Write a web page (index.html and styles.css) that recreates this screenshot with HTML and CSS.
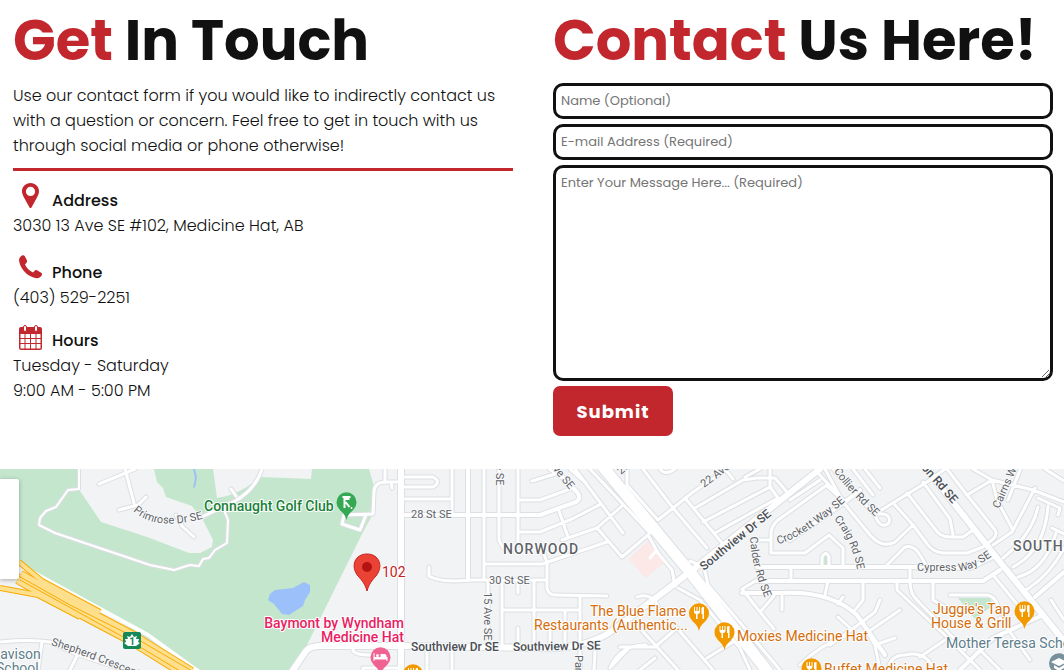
FILE: index.html
```html
<!DOCTYPE html>
<html lang="en">
<head>
<meta charset="utf-8">
<meta name="viewport" content="width=device-width, initial-scale=1">
<title>Contact</title>
<link rel="stylesheet" href="styles.css">
</head>
<body>
<main class="contact">
  <section class="info">
    <h1 class="title"><span class="accent">Get</span> In Touch</h1>
    <p class="intro">Use our contact form if you would like to indirectly contact us with a question or concern. Feel free to get in touch with us through social media or phone otherwise!</p>
    <div class="detail">
      <h2 class="label">
        <svg class="icon" viewBox="0 0 35 35" aria-hidden="true"><path fill-rule="evenodd" d="M17.500 5C12.500 5 9 8.700 9 13.300C9 16 10.200 18 11.300 20L16.500 29.500Q17.500 30.500 18.500 29.500L23.700 20C24.800 18 26 16 26 13.300C26 8.700 22.500 5 17.500 5ZM17.500 8.800A4.600 4.600 0 1 1 17.500 18A4.600 4.600 0 1 1 17.500 8.800Z"/></svg>
        Address
      </h2>
      <p class="line">3030 13 Ave SE #102, Medicine Hat, AB</p>
    </div>
    <div class="detail">
      <h2 class="label">
        <svg class="icon" viewBox="0 0 35 35" aria-hidden="true"><path d="M9 5.500C7 6.500 5.700 8.400 6.100 11C7.500 19.500 15.500 27.300 23.500 28.300C26 28.500 28 27 28.900 25C29.200 24 29 23.300 28.200 22.700L24 20.300C23 19.800 22.300 20 21.600 20.700L20 22.500C16.500 21 13.500 18 12 14.500L13.500 12.800C14.200 12 14.300 11.300 13.900 10.300L11.700 6C11 5 10 5 9 5.500Z"/></svg>
        Phone
      </h2>
      <p class="line">(403) 529-2251</p>
    </div>
    <div class="detail hours">
      <h2 class="label">
        <svg class="icon" viewBox="0 0 35 35" aria-hidden="true"><path fill-rule="evenodd" d="M8 9H27Q29 9 29 11V30Q29 32 27 32H8Q6 32 6 30V11Q6 9 8 9ZM7.500 16V20H11.500V16ZM12.500 16V20H17V16ZM18 16V20H22.500V16ZM23.500 16V20H27.500V16ZM7.500 21V25H11.500V21ZM12.500 21V25H17V21ZM18 21V25H22.500V21ZM23.500 21V25H27.500V21ZM7.500 26V30.500H11.500V26ZM12.500 26V30.500H17V26ZM18 26V30.500H22.500V26ZM23.500 26V30.500H27.500V26Z"/><rect class="ring" x="10.500" y="7.500" width="3" height="6" rx="1.500"/><rect class="ring" x="21.500" y="7.500" width="3" height="6" rx="1.500"/></svg>
        Hours
      </h2>
      <p class="line">Tuesday - Saturday</p>
      <p class="line">9:00 AM - 5:00 PM</p>
    </div>
  </section>
  <section class="reach">
    <h1 class="title"><span class="accent">Contact</span> Us Here!</h1>
    <form class="form">
      <input class="field" type="text" name="name" aria-label="Name" placeholder="Name (Optional)">
      <input class="field" type="email" name="email" aria-label="E-mail address" placeholder="E-mail Address (Required)" required>
      <textarea class="field message" name="message" aria-label="Message" placeholder="Enter Your Message Here... (Required)" required></textarea>
      <button class="submit" type="submit">Submit</button>
    </form>
  </section>
</main>
<section class="map" aria-label="Map">
  <svg class="map-art" viewBox="0 469 1064 201" preserveAspectRatio="xMinYMin slice">
    <defs>
      <g id="lanes">
        <path d="M385 469V482M398 482H386Q374 482 374 492L373 514L344 515L342 524L360 530L366 515M391 482L392 488"/>
        <path d="M405 477H433Q442 482 433 487H405M405 499H450M452 469V515M484 469V580M499 469V540L503 548M518 469V545"/>
        <path d="M518 500H540L570 489M532 481L555 474M518 532H540L572 519L601 504M558 508L568 537M562 540L597 528L623 505M575 469L623 533M590 469L650 533M597 528L622 557L648 535"/>
        <path d="M485 564H542L607 542M543 552L547 562V588Q548 595 555 595L607 596M429 567V576Q440 583 470 580H546M502 580V648M534 580V648M518 580V593M502 610H579M518 628V645M565 610V645M550 630V645M580 597V670M488 580V646M427 648V670M452 648V670M353 646V651Q356 655 370 655M363 670V668H398"/>
        <path d="M627 469V485L658 520M643 469L673 508L707 548M658 520L693 492L727 469M685 498L722 543M715 533L778 498M703 522L770 487M695 508L743 480L757 478H775L787 492M770 469V487L778 498M660 469Q665 476 675 469M725 469L733 479M570 469L586 483M648 535L658 553L672 570L675 586M655 552L650 558"/>
        <path d="M817 472L845 502M827 485L778 520Q771 526 771 534V553H805L829 535M757 540H771M829 535L843 548V567M859 558V567M822 567V557Q826 550 829 557V567M791 567V581M742 589L760 612L774 629M757 580L742 589M774 596L760 612M782 596V610M828 581L825 595M843 597L838 604M863 581V600L855 610M820 480L790 500"/>
        <path d="M825 469L843 502L870 535Q882 549 895 542L913 525L895 505M833 469L875 515Q880 530 889 523Q891 515 883 514H875L927 482L945 469M853 469L873 495M865 469L880 488M907 493L935 529Q940 537 950 537H963L973 530M923 482L950 519L953 535M913 525L928 545Q933 552 943 553H967L983 547M885 567L905 547Q912 545 918 552L925 563"/>
        <path d="M897 581V590L948 638L980 670M910 568V581Q910 594 917 600L965 650M933 581V600L945 607M880 600L875 612L862 622L830 645M862 622L875 645L880 670M868 632L900 610M875 645L895 638M850 628L838 617M800 665Q820 645 847 635M888 670Q890 655 905 655Q925 650 935 670M920 657L945 640"/>
        <path d="M947 469L967 495L995 530Q999 536 988 543M967 495L992 480L1033 490L1064 502M973 469L992 480L997 500L1013 530M1035 488L1012 532L993 545M1058 515L1060 508L1038 498M1038 507Q1032 535 1003 558M1048 506Q1045 550 1013 567M1052 528L1064 534M1056 533Q1045 570 1018 577M1064 548Q1050 575 1026 590M993 575L1030 620M950 595H987Q995 596 998 606M1000 618L1030 660M980 650L1000 670M1051 600L1064 620M1020 470L1008 500M1045 469L1064 481"/>
        <path d="M637 597Q651 592 658 606M630 647L610 668M637 625L678 670M610 668Q620 645 646 645M655 647L677 628M677 628L713 670M707 658L733 642M595 652L594 670M678 588L700 600L740 648L750 670M690 561L704 567L708 585L770 658L780 670M760 469L745 477M620 647L655 647L677 628M640 670L655 658"/>
        <path d="M125 469L134 503M99 484L135 469M119 510L138 505L146 497M176 515L182 526L194 537M204 516L235 501Q255 490 262 469M231 489L236 496M42 642L38 670M78 654L70 670"/>
        <path d="M0 642Q30 639 50 642L76 654L130 672"/>
      </g>
      <g id="streets">
        <path d="M403 515H540L576 502Q582 498 577 492L560 475L550 469M468 469V580M757 567H917M757 581H983L1000 570M917 568H970L995 556M742 593H780Q830 590 857 615L885 655M827 485L845 502L860 490M1043 615L993 638L960 670M1035 597L1064 572M845 502L790 540"/>
      </g>
      <g id="avenues">
        <path d="M293 670L306 651Q310 646 320 646H403L540 648Q590 650 620 625L690 572L820 469"/>
        <path d="M401 469V670M927 469L1000 562L1064 641"/>
      </g>
      <path id="trail" d="M79 469V489L68 490L56 507L46 511L40 518L39 525L55 533L150 565L174 570L190 565L199 566L203 559L209 558L215 550L227 543L228 520L224 510"/>
      <path id="main" d="M603 467L690 572L768 672"/>
      <path id="hw" d="M0 562L19 577L60 600L132 638L190 674M19 562L42 581L100 612M0 588L38 595L80 617"/>
      <path id="p-primrose" d="M133 511Q158 534 215 515"/>
      <path id="p-shep" d="M51 645Q87 656 160 686"/>
      <path id="p-south" d="M704 571L800 492"/>
      <path id="p-crockett" d="M778 544Q805 538 856 492"/>
      <path id="p-collier" d="M834 471Q845 489 886 527"/>
      <path id="p-craig" d="M834 519Q854 542 859 580"/>
      <path id="p-calder" d="M750 537Q751 570 773 617"/>
      <path id="p-cypress" d="M917 571H961Q975 570 1008 545"/>
    </defs>
    <rect class="land" x="0" y="469" width="1064" height="201"/>
    <path class="park" d="M9 469H80V491L101 522L147 537L189 553H200L212 547L213 540L203 520L192 506L166 497L163 488L157 482L154 469H213L217 498Q240 495 260 477L311 479L312 469H369L373 483V514L363 532L306 647L293 670H200L19 562L0 540V469Z"/>
    <path class="park" d="M958 598H990L993 605L975 619ZM823 565V557Q826 553 828 557V565Z"/>
    <path class="water" d="M193 469L195 478L193 488L195 487L197 478L195 469ZM270 594L275 590L293 588L304 582L310 585V592L305 600L303 606L289 615L282 614L274 604L268 600Z"/>
    <g class="edge"><use href="#lanes" class="w5"/><use href="#streets" class="w6"/><use href="#avenues" class="w8"/><use href="#trail" class="w4"/><use href="#main" class="w12"/></g>
    <path class="plaza" d="M629 559L648 541L664 563L645 578Z"/>
    <g class="road"><use href="#lanes" class="w3"/><use href="#streets" class="w4"/><use href="#avenues" class="w6"/><use href="#trail" class="w2"/><use href="#main" class="w11"/></g>
    <path class="road w4" d="M29 570L148 635L202 674"/>
    <use href="#hw" class="hw-edge"/>
    <path class="hw-edge wide" d="M19 577L60 600L132 638L190 674"/>
    <use href="#hw" class="hw-fill"/>
    <path class="hw-fill wide" d="M19 577L60 600L132 638L190 674"/>
    <path class="hw-mid" d="M15 574L70 605L132 636L192 671M20 580L60 602L125 638L180 671"/>

    <rect x="123" y="632" width="18" height="17" rx="2" fill="#168757"/>
    <path fill="#fff" d="M132 634L134 637L137 636L136 639L139 639L138 642L140 643L136 646H128L124 643L126 642L125 639L128 639L127 636L130 637Z"/>
    <text class="shield" x="132" y="645">1</text>

    <g class="street">
      <text><textPath href="#p-primrose">Primrose Dr SE</textPath></text>
      <text><textPath href="#p-shep">Shepherd Crescent</textPath></text>
      <text><textPath href="#p-crockett">Crockett Way SE</textPath></text>
      <text><textPath href="#p-collier">Collier Rd SE</textPath></text>
      <text><textPath href="#p-craig">Craig Rd SE</textPath></text>
      <text><textPath href="#p-calder">Calder Rd SE</textPath></text>
      <text><textPath href="#p-cypress">Cypress Way SE</textPath></text>
      <text x="411" y="518">28 St SE</text>
      <text x="489" y="584">30 St SE</text>
      <text transform="translate(484 592) rotate(90)">15 Ave SE</text>
      <text transform="translate(496 452) rotate(90)">Ave SE</text>
      <text transform="translate(548 464) rotate(50)">Ave SE</text>
      <text transform="translate(575 655) rotate(90)">Park St</text>
      <text transform="translate(704 488) rotate(-37)">22 Ave SE</text>
      <text transform="translate(621 475) rotate(-42)">20 Ave</text>
      <text transform="translate(999 509) rotate(-66)">Cairns Way</text>
    </g>
    <g class="street major">
      <text x="411" y="651">Southview Dr SE</text>
      <text transform="translate(513 651) rotate(-1)">Southview Dr SE</text>
      <text><textPath href="#p-south">Southview Dr SE</textPath></text>
      <text transform="translate(902 446) rotate(49)">Division Rd SE</text>
    </g>
    <g class="district"><text x="503" y="554">NORWOOD</text><text x="1013" y="551">SOUTH</text></g>
    <g class="poi school"><text x="-9" y="659">Davison</text><text x="-4" y="673">School</text><text x="946" y="648">Mother Teresa School</text></g>
    <g class="poi food">
      <text x="590" y="616">The Blue Flame</text><text x="534" y="630">Restaurants (Authentic...</text>
      <text x="737" y="641">Moxies Medicine Hat</text><text x="824" y="674">Buffet Medicine Hat</text>
      <text x="933" y="614">Juggie's Tap</text><text x="931" y="628">House &amp; Grill</text>
    </g>
    <g class="poi golf"><text x="204" y="511">Connaught Golf Club</text></g>
    <g class="poi hotel"><text class="end" x="404" y="628">Baymont by Wyndham</text><text class="end" x="404" y="642">Medicine Hat</text></g>
    <text class="poi here" x="382" y="577">102</text>

    <defs>
      <path id="pin" d="M0 18C-1.500 12-4 11-7 7.500A10 10 0 1 1 7 7.500C4 11 1.500 12 0 18Z"/>
      <path id="dine" d="M-5-6V-1Q-5 1-3 1V6H-1.500V1Q1 1 1-1V-6H0V-2H-1.500V-6H-2.500V-2H-4V-6ZM2.500-5Q2.500-6 5-6V6H3.500V1H2.500Z"/>
    </defs>
    <g transform="translate(346.500 502)"><use href="#pin" fill="#34a853"/><path class="golfer" d="M-4-5H4M-2-5V-3L3-3M-2-3V6M-1 0L3 5"/><circle cx="5" cy="6" r="1" fill="#fff"/></g>
    <g fill="#f29900"><use href="#pin" x="699" y="613"/><use href="#pin" x="724.500" y="632"/><use href="#pin" x="1024.500" y="611"/><use href="#pin" x="811.500" y="668"/><use href="#pin" x="413" y="674"/></g>
    <g fill="#fff"><use href="#dine" x="699" y="613"/><use href="#dine" x="724.500" y="632"/><use href="#dine" x="1024.500" y="611"/><use href="#dine" x="811.500" y="668"/><use href="#dine" x="413" y="674"/></g>
    <g transform="translate(380.500 657)"><use href="#pin" fill="#f06292"/><path fill="#fff" d="M-7-4H-6V1H6V-1Q6-3 4-3H0V0H-6V4H-7ZM6 0H7V4H6ZM-6 1H6V2.500H-6Z"/><circle cx="-3" cy="-1.500" r="1.500" fill="#fff"/></g>
    <g transform="translate(1059 663)"><use href="#pin" fill="#78909c"/><path fill="#fff" d="M-8-1L0-5L8-1L0 3ZM-5 2L0 5L5 2V5L0 8L-5 5Z"/></g>
    <path d="M367 591C365 584 362.500 581 358 576C350 566 355 554 367 554C379 554 384 566 376 576C371.500 581 369 584 367 591Z" fill="#ea4335" stroke="#c5221f" stroke-width="1"/>
    <circle cx="367" cy="567" r="5" fill="#b31412"/>
  </svg>
  <div class="map-card"></div>
</section>
</body>
</html>
```

FILE: styles.css
```css
* {
  box-sizing: border-box;
}

body {
  margin: 0;
  background: #fff;
  color: #111;
  font: 300 16px/25px Poppins, Inter, "Open Sans", sans-serif;
}

h1,
h2,
p {
  margin: 0;
}

.contact {
  display: grid;
  grid-template-columns: 1fr 1fr;
  gap: 40px;
  padding: 0 11px 33px 13px;
}

.title {
  padding-bottom: 1px;
  font-size: 56px;
  font-weight: 700;
  line-height: 82px;
  white-space: nowrap;
}

.accent {
  color: #c1272d;
}

.intro {
  padding-bottom: 10px;
  margin-bottom: 7px;
  border-bottom: 3px solid #c1272d;
}

.detail {
  margin-bottom: 12px;
}

.hours {
  margin-top: -4px;
  margin-bottom: 0;
}

.label {
  display: flex;
  align-items: flex-end;
  gap: 4px;
  height: 35px;
  font-size: 16px;
  font-weight: 500;
  line-height: 25px;
}

.icon {
  width: 35px;
  height: 35px;
  fill: #c1272d;
}

.ring {
  fill: #fff;
  stroke: #c1272d;
}

.form {
  display: flex;
  flex-direction: column;
  align-items: flex-start;
  gap: 5px;
}

.field {
  display: block;
  width: 100%;
  height: 36px;
  padding: 5px;
  border: 3px solid #111;
  border-radius: 10px;
  background: #fff;
  color: #111;
  font: 400 13px/20px Poppins, Inter, "Open Sans", sans-serif;
}

.field::placeholder {
  color: #757575;
}

.message {
  height: 216px;
  resize: both;
}

.submit {
  width: 120px;
  height: 50px;
  padding: 0;
  border: 0;
  border-radius: 7px;
  background: #c1272d;
  color: #fff;
  font: 700 18px/25px Poppins, Inter, "Open Sans", sans-serif;
  letter-spacing: 1px;
}

.map {
  position: relative;
  overflow: hidden;
}

.map-art {
  display: block;
  width: 100%;
  font-family: Roboto, sans-serif;
  font-weight: 400;
}

.map-card {
  position: absolute;
  top: 10px;
  left: 0;
  width: 19px;
  height: 100px;
  background: #fff;
  border-radius: 0 2px 2px 0;
  box-shadow: 0 1px 4px rgba(0, 0, 0, 0.3);
}

.land { fill: #f1f3f4; }
.park { fill: #c3e6cd; }
.water { fill: #9cc0f9; }
.plaza { fill: #fce8e6; }

.edge,
.road,
.hw-edge,
.hw-fill,
.hw-mid {
  fill: none;
  stroke-linejoin: round;
}

.edge { stroke: #dcdfe3; stroke-linecap: round; }
.road { stroke: #fff; stroke-linecap: round; }
.w2 { stroke-width: 2px; }
.w3 { stroke-width: 3px; }
.w4 { stroke-width: 4px; }
.w5 { stroke-width: 5px; }
.w6 { stroke-width: 6px; }
.w8 { stroke-width: 8px; }
.w11 { stroke-width: 11px; }
.w12 { stroke-width: 13px; }

.hw-edge { stroke: #f9ab00; stroke-width: 6px; }
.hw-fill { stroke: #fddf8e; stroke-width: 4px; }
.hw-edge.wide { stroke-width: 15px; }
.hw-fill.wide { stroke-width: 13px; }
.hw-mid { stroke: #f9ab00; stroke-width: 1px; }

.street text,
.poi text,
.poi,
.district text {
  paint-order: stroke;
  stroke: #fff;
  stroke-width: 2px;
  stroke-linejoin: round;
}

.street text {
  stroke: #f8f9fa;
}

.street {
  fill: #5f6368;
  font-size: 11px;
}

.major {
  fill: #4b4f54;
  font-size: 12px;
  font-weight: 500;
}

.district {
  fill: #5f6368;
  font-size: 14px;
  font-weight: 500;
  letter-spacing: 1px;
}

.poi { font-size: 14px; }
.school { fill: #607d8b; }
.food { fill: #d56e0c; }
.golf { fill: #188038; font-weight: 500; }
.hotel { fill: #e91e63; font-weight: 500; }
.here { fill: #c5221f; }
.end { text-anchor: end; }

.golfer {
  fill: none;
  stroke: #fff;
  stroke-width: 2px;
}

.shield {
  fill: #168757;
  font-size: 10px;
  font-weight: 700;
  text-anchor: middle;
}
```
